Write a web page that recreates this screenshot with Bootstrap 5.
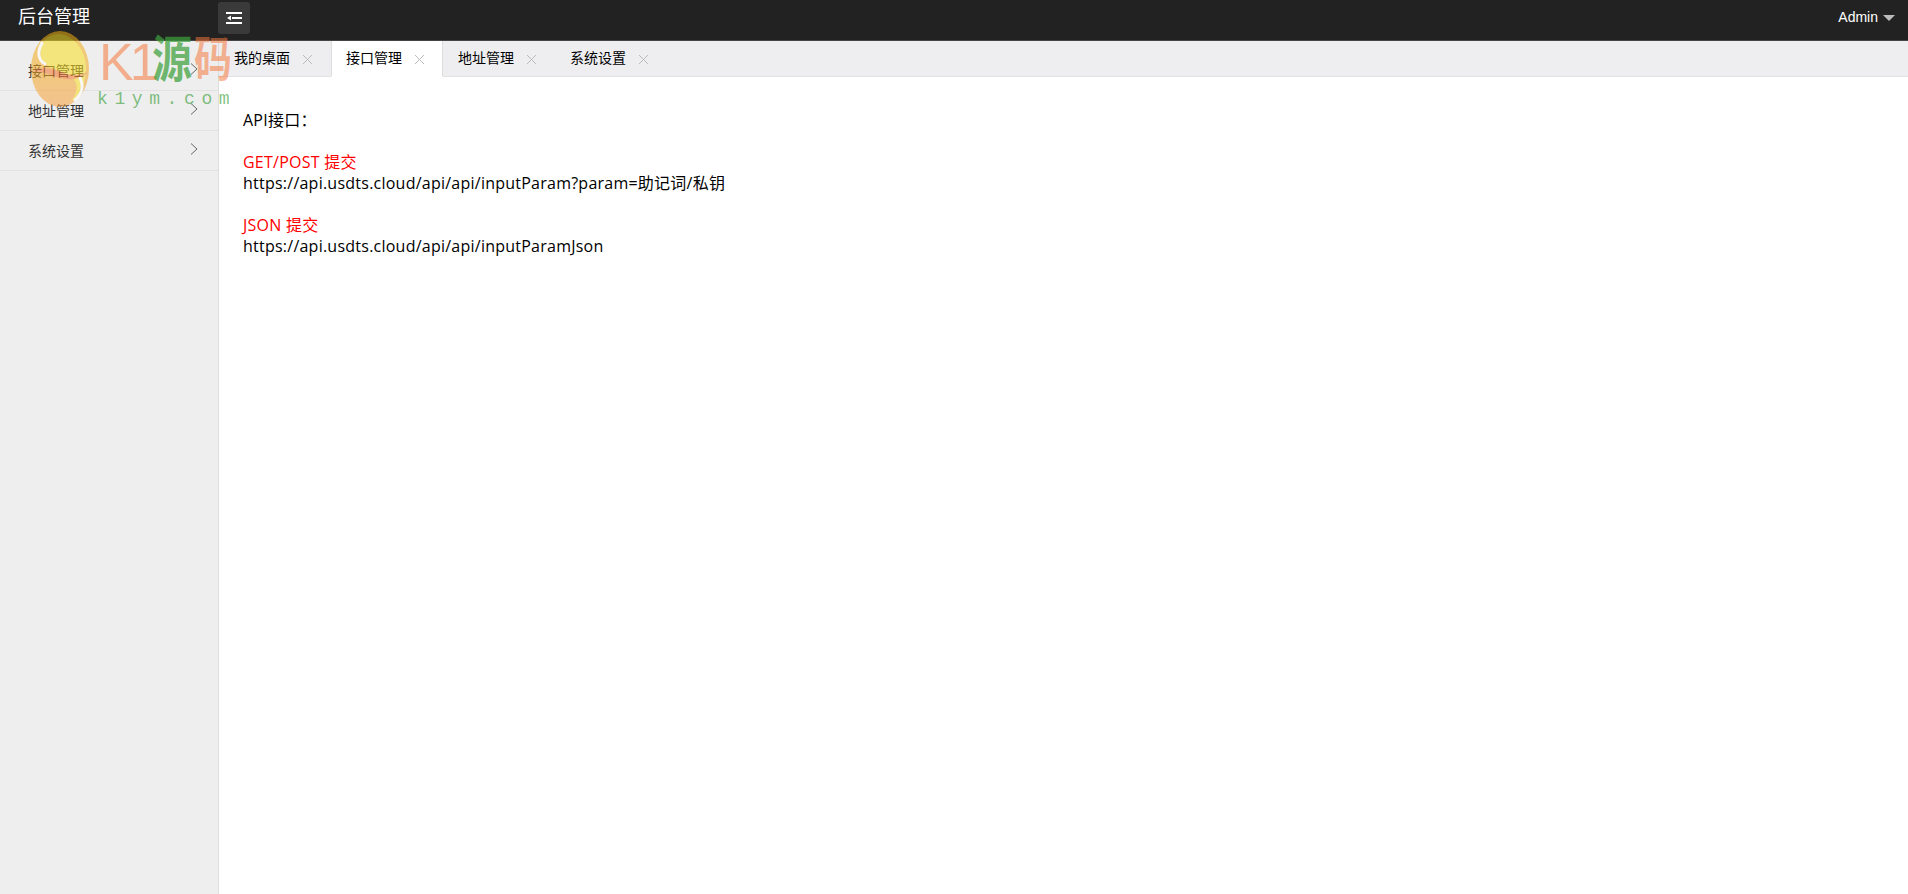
<!DOCTYPE html>
<html lang="zh">
<head>
<meta charset="utf-8">
<title>后台管理</title>
<link href="https://cdn.jsdelivr.net/npm/bootstrap@5.3.0/dist/css/bootstrap.min.css" rel="stylesheet">
<style>
html,body{height:100%;}
body{font-family:"Liberation Sans","Noto Sans CJK SC",sans-serif;font-size:14px;color:#333;background:#fff;overflow:hidden;position:relative;}
.shell{height:894px;}
.topbar{height:41px;background:#222;border-bottom:1px solid #444;color:#fff;flex:none;}
.brand{width:218px;padding-left:18px;font-size:18px;line-height:34px;height:40px;}
.fold{width:32px;height:32px;background:#3a3a3a;border-radius:3px;margin-top:2px;}
.userbox{padding-right:13px;font-size:14px;line-height:34px;height:34px;}
.caret-d{width:0;height:0;border-left:6px solid transparent;border-right:6px solid transparent;border-top:6px solid #bbb;margin-left:5px;margin-top:2px;}
.side{width:219px;background:#eee;border-right:1px solid #ddd;flex:none;padding-top:10px;}
.side-row{height:40px;border-bottom:1px solid #e2e2e2;padding:0 20px 0 28px;color:#333;font-size:14px;line-height:39px;}
.side-row span{padding-top:2px;}
.chev{margin-top:-4px;}
.tabbar{height:36px;background:#eeeef0;border-bottom:1px solid #e2e2e2;flex:none;}
.tabitem{width:112px;height:36px;padding-left:15px;font-size:14px;line-height:34px;color:#000;flex:none;}
.tabitem.on{background:#fff;border-left:1px solid #ddd;border-right:1px solid #ddd;border-bottom:1px solid #fff;padding-left:14px;}
.tabx{margin-left:12px;}
.pane{padding:33px 24px;font-family:"Open Sans","Noto Sans CJK SC",sans-serif;font-size:16px;line-height:21px;letter-spacing:.24px;color:#000;}
.pane p{margin:0;}
.redline{color:#f00;}
.gapline{height:21px;}
.wm{position:absolute;left:30px;top:30px;width:210px;height:85px;pointer-events:none;}
.wm svg{position:absolute;left:0;top:0;opacity:.55;}
.wm-k{position:absolute;left:69px;top:6px;font-size:52px;line-height:52px;color:rgba(246,120,60,.55);white-space:nowrap;letter-spacing:-4px;}
.wm-yuan{position:absolute;left:122px;top:4px;font-size:40px;line-height:40px;font-weight:700;color:rgba(60,160,60,.72);transform:scaleY(1.25);transform-origin:top left;}
.wm-ma{position:absolute;left:164px;top:6px;font-size:38px;line-height:38px;font-weight:700;color:rgba(246,120,60,.55);transform:scaleY(1.25);transform-origin:top left;}
.wm-url{position:absolute;left:67px;top:59px;font-family:"Liberation Mono",monospace;font-size:18px;line-height:20px;letter-spacing:6.6px;color:rgba(60,160,60,.65);white-space:nowrap;}
</style>
</head>
<body>
<div class="shell d-flex flex-column">
  <header class="topbar d-flex align-items-start justify-content-between">
    <div class="d-flex align-items-start">
      <div class="brand">后台管理</div>
      <div class="fold d-flex align-items-center justify-content-center">
        <svg width="16" height="12" viewBox="0 0 16 12"><path d="M0 0h16v2H0zM6 5h10v2H6zM0 10h16v2H0z" fill="#fff"/><path d="M1 6l4-2.6v5.2z" fill="#fff"/></svg>
      </div>
    </div>
    <div class="userbox d-flex align-items-center"><span>Admin</span><span class="caret-d"></span></div>
  </header>
  <div class="d-flex flex-grow-1">
    <nav class="side">
      <div class="side-row d-flex justify-content-between align-items-center"><span>接口管理</span><svg class="chev" width="8" height="12" viewBox="0 0 8 12"><path d="M1 .5L7 6 1 11.5" fill="none" stroke="#666" stroke-width="1"/></svg></div>
      <div class="side-row d-flex justify-content-between align-items-center"><span>地址管理</span><svg class="chev" width="8" height="12" viewBox="0 0 8 12"><path d="M1 .5L7 6 1 11.5" fill="none" stroke="#666" stroke-width="1"/></svg></div>
      <div class="side-row d-flex justify-content-between align-items-center"><span>系统设置</span><svg class="chev" width="8" height="12" viewBox="0 0 8 12"><path d="M1 .5L7 6 1 11.5" fill="none" stroke="#666" stroke-width="1"/></svg></div>
    </nav>
    <main class="flex-grow-1 d-flex flex-column">
      <div class="tabbar d-flex">
        <div class="tabitem">我的桌面<svg class="tabx" width="11" height="11" viewBox="0 0 11 11"><path d="M1 1l9 9M10 1l-9 9" stroke="#bbb" stroke-width="1"/></svg></div>
        <div class="tabitem on">接口管理<svg class="tabx" width="11" height="11" viewBox="0 0 11 11"><path d="M1 1l9 9M10 1l-9 9" stroke="#bbb" stroke-width="1"/></svg></div>
        <div class="tabitem">地址管理<svg class="tabx" width="11" height="11" viewBox="0 0 11 11"><path d="M1 1l9 9M10 1l-9 9" stroke="#bbb" stroke-width="1"/></svg></div>
        <div class="tabitem">系统设置<svg class="tabx" width="11" height="11" viewBox="0 0 11 11"><path d="M1 1l9 9M10 1l-9 9" stroke="#bbb" stroke-width="1"/></svg></div>
      </div>
      <section class="pane">
        <p>API接口：</p>
        <div class="gapline"></div>
        <p class="redline">GET/POST 提交</p>
        <p>https://api.usdts.cloud/api/api/inputParam?param=助记词/私钥</p>
        <div class="gapline"></div>
        <p class="redline">JSON 提交</p>
        <p>https://api.usdts.cloud/api/api/inputParamJson</p>
      </section>
    </main>
  </div>
</div>
<div class="wm">
  <svg width="60" height="80" viewBox="0 0 60 80">
    <defs><linearGradient id="gold" x1="0" y1="0" x2="0" y2="1"><stop offset="0" stop-color="#f0b010"/><stop offset=".6" stop-color="#f5a828"/><stop offset="1" stop-color="#f8a040"/></linearGradient></defs>
    <ellipse cx="30" cy="39" rx="29" ry="38" fill="url(#gold)"/>
    <path d="M15 9C8 20 9 30 18 36c10 5 24 7 28 17 2 7-1 14-6 19 10-6 16-19 16-34C56 20 44 6 30 4 24 4 19 6 15 9z" fill="#f8dc20"/>
    <path d="M2 42c8-6 18-4 28 0s20 4 28 0c-6 7-18 9-28 6S10 40 2 42z" fill="#f2602a" opacity=".75"/>
    <path d="M12 13c-5 9-4 17 3 21M50 48c4 8 2 16-5 22" fill="none" stroke="#fff" stroke-width="3" stroke-linecap="round"/>
  </svg>
  <span class="wm-k">K1</span>
  <span class="wm-yuan">源</span>
  <span class="wm-ma">码</span>
  <span class="wm-url">k1ym.com</span>
</div>
<script src="https://cdn.jsdelivr.net/npm/bootstrap@5.3.0/dist/js/bootstrap.bundle.min.js"></script>
</body>
</html>
